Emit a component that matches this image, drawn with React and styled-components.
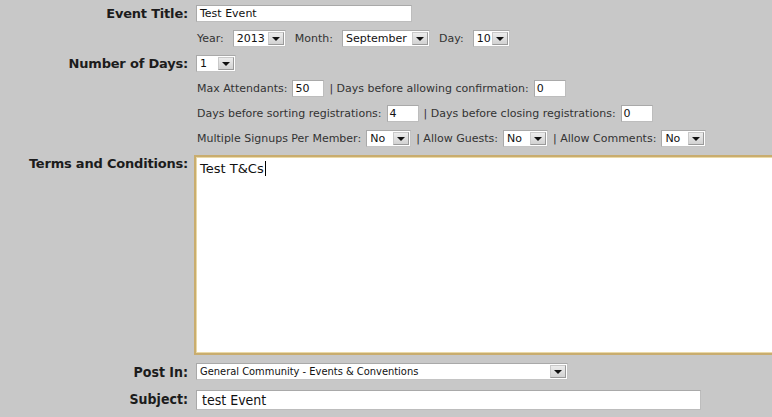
import React from 'react';
import styled, { createGlobalStyle } from 'styled-components';

const GlobalStyle = createGlobalStyle`
  html, body {
    margin: 0;
    padding: 0;
    background: #c8c8c8;
    overflow: hidden;
  }
  body {
    font-family: "DejaVu Sans", Verdana, sans-serif;
    color: #222;
  }
`;

const Form = styled.div`
  display: grid;
  grid-template-columns: 188px 1fr;
  column-gap: 8px;
  row-gap: 8px;
  padding-top: 5px;
  width: 772px;
  overflow: hidden;
`;

const Label = styled.div`
  text-align: right;
  font-weight: bold;
  font-size: ${p => (p.$narrow ? '14px' : '13px')};
  font-family: ${p => (p.$narrow ? '"DejaVu Sans Condensed", "DejaVu Sans", sans-serif' : '"DejaVu Sans", Verdana, sans-serif')};
  color: #1c1c1c;
  align-self: ${p => (p.$top ? 'start' : 'center')};
  padding-top: ${p => (p.$top ? '1px' : '0')};
  white-space: nowrap;
  letter-spacing: ${p => (p.$narrow ? '0' : '-0.2px')};
`;

const Line = styled.div`
  display: flex;
  align-items: center;
  gap: ${p => p.$gap || 5}px;
  font-size: 11px;
  color: #333;
  white-space: nowrap;
  height: 17px;
  margin-left: 1px;
`;

const TextInput = styled.div`
  box-sizing: border-box;
  width: ${p => p.$w}px;
  height: ${p => p.$h || 17}px;
  background: #fff;
  border: 1px solid #a9a9a9;
  border-right-color: #bdbdbd;
  border-bottom-color: #bdbdbd;
  font-size: ${p => p.$fs || 11}px;
  font-family: ${p => (p.$narrow ? '"DejaVu Sans Condensed", "DejaVu Sans", sans-serif' : '"DejaVu Sans", Verdana, sans-serif')};
  color: #111;
  padding-left: ${p => p.$pl || 2}px;
  line-height: ${p => (p.$h || 17) - 2}px;
  white-space: nowrap;
  overflow: hidden;
  margin-top: ${p => p.$mt || 0}px;
`;

const SelectBox = styled.div`
  box-sizing: border-box;
  width: ${p => p.$w}px;
  height: 17px;
  background: #fff;
  border: 1px solid #a9a9a9;
  border-right-color: #c4c4c4;
  border-bottom-color: #c4c4c4;
  display: flex;
  align-items: center;
  justify-content: space-between;
  gap: 1px;
  padding: 1px;
  font-size: ${p => p.$fs || 11}px;
  font-family: ${p => (p.$narrow ? '"DejaVu Sans Condensed", "DejaVu Sans", sans-serif' : '"DejaVu Sans", Verdana, sans-serif')};
  color: #111;
`;

const SelectText = styled.span`
  padding-left: 2px;
  white-space: nowrap;
  line-height: 13px;
`;

const ArrowButton = styled.span`
  box-sizing: border-box;
  flex: none;
  width: 16px;
  height: 13px;
  background: linear-gradient(#ececec, #d2d2d2);
  border: 1px solid #9a9a9a;
  border-top-color: #c9c9c9;
  border-left-color: #c9c9c9;
  display: flex;
  align-items: flex-end;
  justify-content: center;
  padding-bottom: 3px;
`;

const Triangle = styled.span`
  width: 0;
  height: 0;
  border-left: 4px solid transparent;
  border-right: 4px solid transparent;
  border-top: 4px solid #111;
`;

const TermsBox = styled.div`
  box-sizing: border-box;
  width: 620px;
  height: 200px;
  margin-left: -2px;
  background: #fff;
  border: 2px solid #c9ad6f;
  box-shadow: inset 0 0 0 1px #ead9a8;
  padding: 4px 4px;
  font-size: 13px;
  color: #111;
`;

const Caret = styled.span`
  display: inline-block;
  width: 1px;
  height: 15px;
  background: #000;
  vertical-align: -3px;
  margin-left: 1px;
`;

const Select = ({ value, w, fs, narrow }) => (
  <SelectBox $w={w} $fs={fs} $narrow={narrow}>
    <SelectText>{value}</SelectText>
    <ArrowButton>
      <Triangle />
    </ArrowButton>
  </SelectBox>
);

const App = () => (
  <>
    <GlobalStyle />
    <Form>
      <Label>Event Title:</Label>
      <TextInput $w={216} $pl={3}>Test Event</TextInput>

      <div />
      <Line $gap={9}>
        <span>Year:</span>
        <Select value="2013" w={53} />
        <span>Month:</span>
        <Select value="September" w={88} />
        <span>Day:</span>
        <Select value="10" w={37} />
      </Line>

      <Label>Number of Days:</Label>
      <Select value="1" w={40} />

      <div />
      <Line>
        <span>Max Attendants:</span>
        <TextInput $w={32}>50</TextInput>
        <span>| Days before allowing confirmation:</span>
        <TextInput $w={32}>0</TextInput>
      </Line>

      <div />
      <Line>
        <span>Days before sorting registrations:</span>
        <TextInput $w={32}>4</TextInput>
        <span>| Days before closing registrations:</span>
        <TextInput $w={32}>0</TextInput>
      </Line>

      <div />
      <Line>
        <span>Multiple Signups Per Member:</span>
        <Select value="No" w={45} />
        <span>| Allow Guests:</span>
        <Select value="No" w={45} />
        <span>| Allow Comments:</span>
        <Select value="No" w={45} />
      </Line>

      <Label $top>Terms and Conditions:</Label>
      <TermsBox>
        Test T&amp;Cs<Caret />
      </TermsBox>

      <Label $narrow>Post In:</Label>
      <Select value="General Community - Events & Conventions" w={372} fs={11} narrow />

      <Label $narrow>Subject:</Label>
      <TextInput $w={505} $h={20} $fs={14} $pl={5} $narrow $mt={2}>test Event</TextInput>
    </Form>
  </>
);

export default App;
